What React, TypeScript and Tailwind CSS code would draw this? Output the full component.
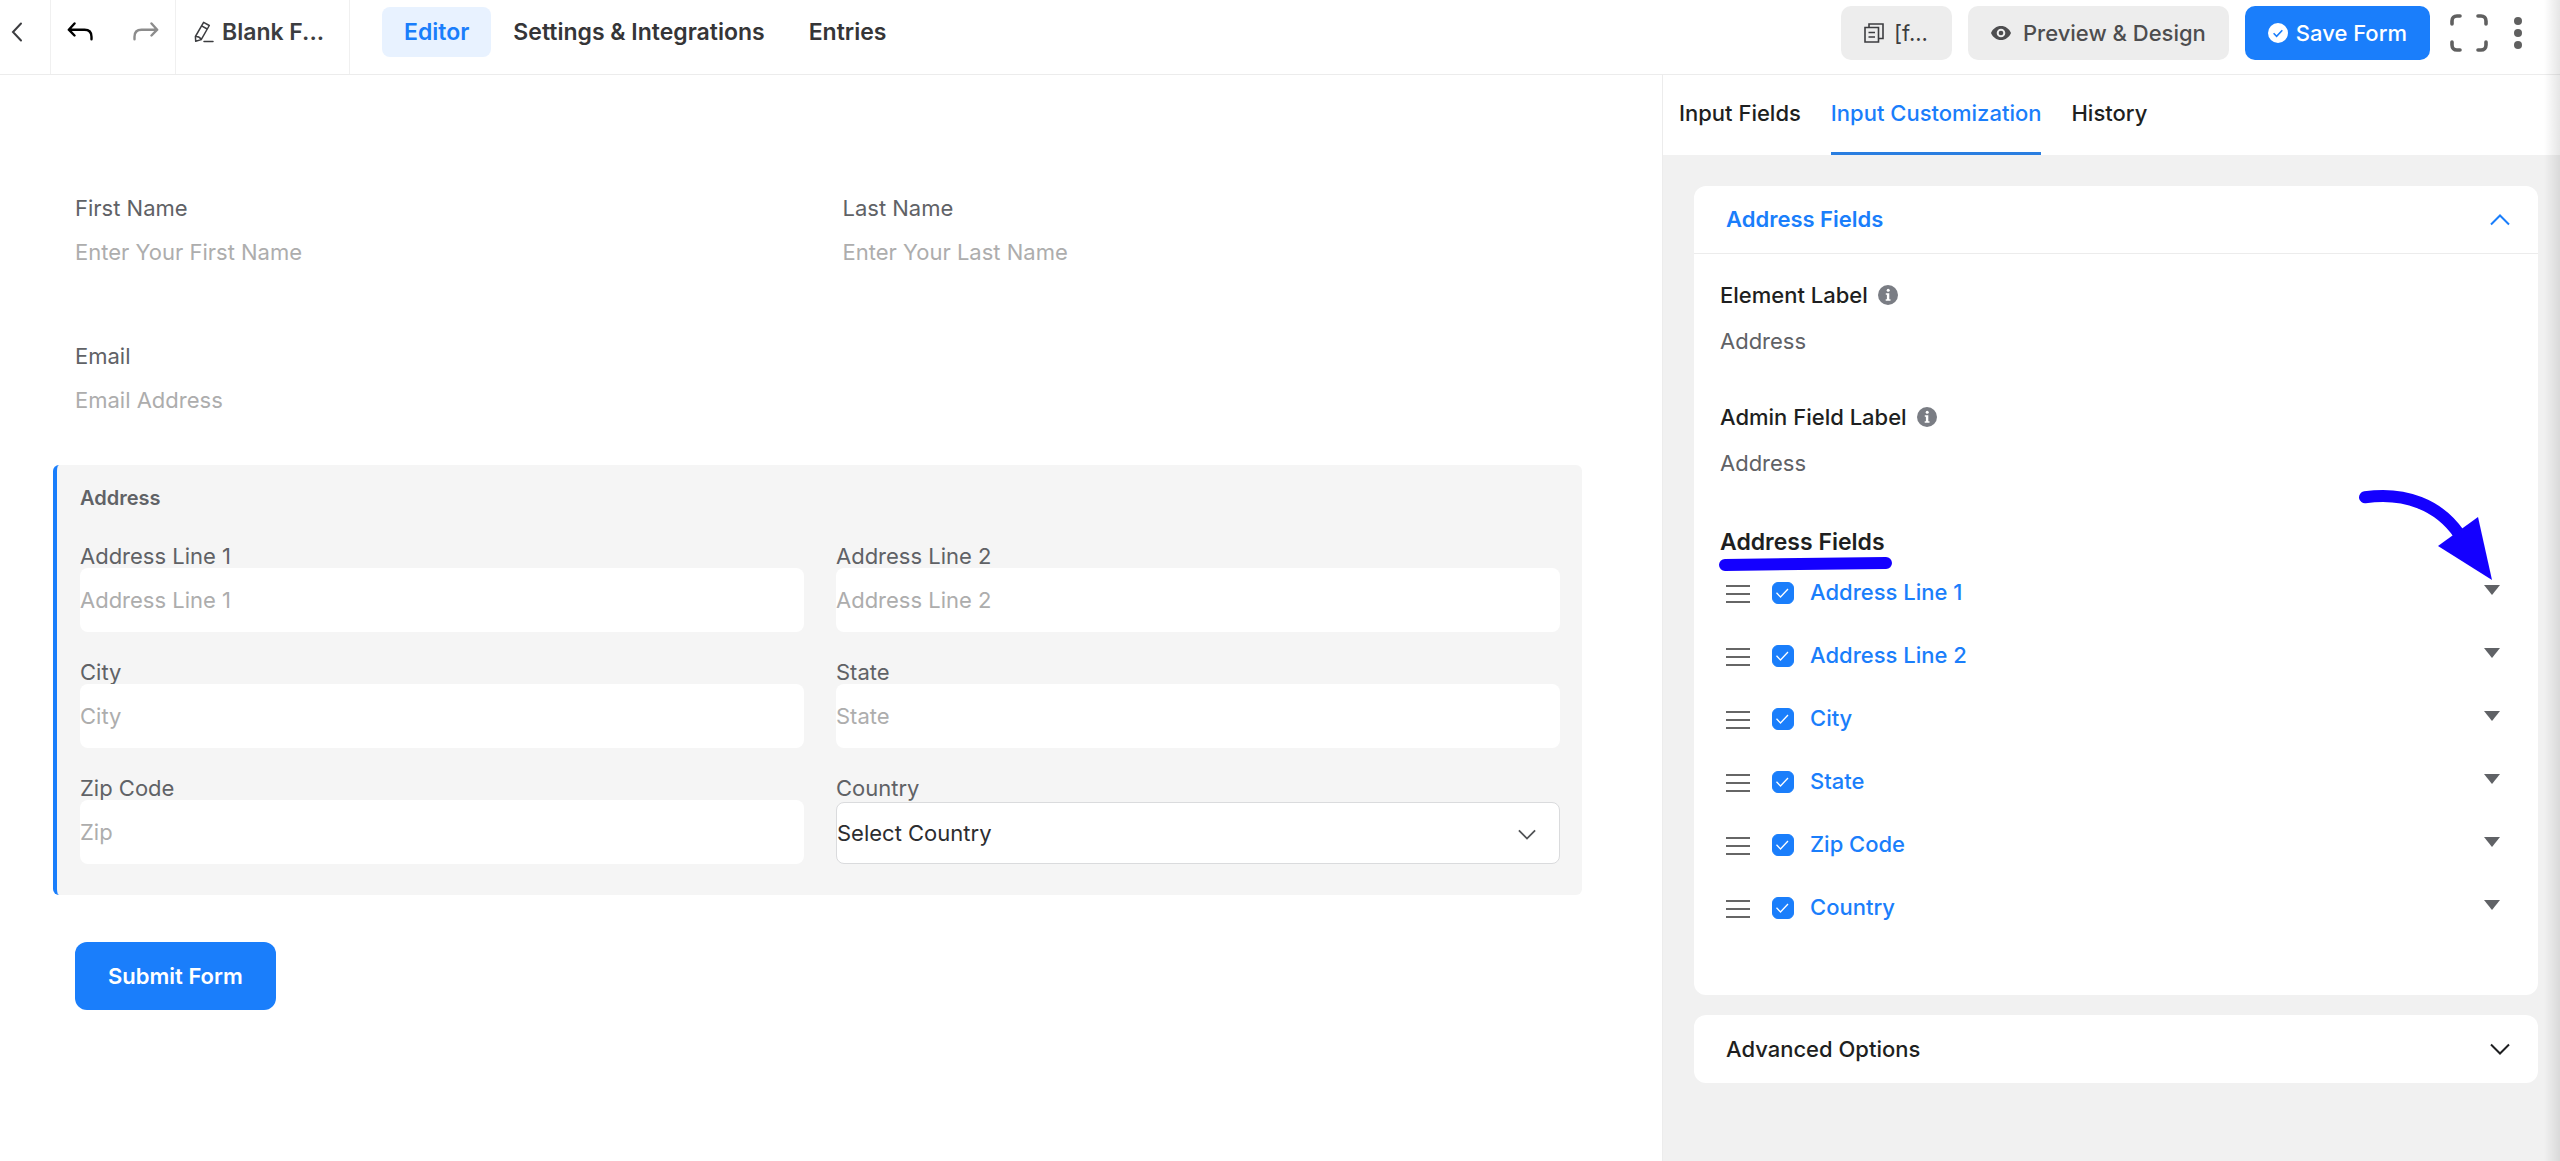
import React, { useState } from "react";
import clsx from "clsx";

type IconProps = { className?: string };

const BackIcon = ({ className }: IconProps) => (
  <svg viewBox="0 0 12 20" fill="none" className={className}>
    <path d="M10 1.500 2 10l8 8.500" stroke="currentColor" strokeWidth="2" strokeLinecap="round" />
  </svg>
);

const UndoIcon = ({ className }: IconProps) => (
  <svg viewBox="0 0 26 20" fill="none" className={className}>
    <path
      d="M7.500 1.500 1.800 7.700l5.700 5.800M2.200 7.700h15.300c4.600 0 7 2.500 7 7v2.600"
      stroke="currentColor"
      strokeWidth="2.400"
      strokeLinecap="round"
      strokeLinejoin="round"
    />
  </svg>
);

const PencilIcon = ({ className }: IconProps) => (
  <svg viewBox="0 0 20 22" fill="none" className={className}>
    <path
      d="M9.600 1.300 15.300 4.500 7.200 18.600 1.700 20.300 1.400 15.500ZM7.600 4.800l5.600 3.200M1.400 15.500c2.600-.4 4.800.8 5.800 3.100M10 20.600h9"
      stroke="currentColor"
      strokeWidth="1.500"
      strokeLinejoin="round"
      strokeLinecap="round"
    />
  </svg>
);

const CopyIcon = ({ className }: IconProps) => (
  <svg viewBox="0 0 20 20" fill="none" className={className}>
    <path
      d="M1 4.500h13.500V19H1ZM5 4.500V1h14v14.500h-4.500M4.500 9.500H11M4.500 14H11"
      stroke="currentColor"
      strokeWidth="1.600"
    />
  </svg>
);

const EyeIcon = ({ className }: IconProps) => (
  <svg viewBox="0 0 20 14" className={className}>
    <path
      fillRule="evenodd"
      d="M10 0C5.500 0 1.800 2.700 0 7c1.800 4.300 5.500 7 10 7s8.200-2.700 10-7C18.200 2.700 14.500 0 10 0Zm0 11.300a4.300 4.300 0 1 1 0-8.600 4.300 4.300 0 0 1 0 8.600Z"
      fill="currentColor"
    />
    <circle cx="10" cy="7" r="2.300" fill="currentColor" />
  </svg>
);

const CheckBadgeIcon = ({ className }: IconProps) => (
  <svg viewBox="0 0 20 20" fill="none" className={className}>
    <circle cx="10" cy="10" r="10" fill="#fff" />
    <path d="m5.600 10.300 3 3 5.700-6" stroke="#1a7efb" strokeWidth="1.600" />
  </svg>
);

const FullscreenIcon = ({ className }: IconProps) => (
  <svg viewBox="0 0 38 38" fill="none" className={className}>
    <path
      d="M2 10V7c0-3 2-5 5-5h3M28 2h3c3 0 5 2 5 5v3M36 28v3c0 3-2 5-5 5h-3M10 36H7c-3 0-5-2-5-5v-3"
      stroke="currentColor"
      strokeWidth="3.600"
      strokeLinecap="round"
    />
  </svg>
);

const DotsIcon = ({ className }: IconProps) => (
  <svg viewBox="0 0 8 32" className={className}>
    <circle cx="4" cy="4" r="4" fill="currentColor" />
    <circle cx="4" cy="16" r="4" fill="currentColor" />
    <circle cx="4" cy="28" r="4" fill="currentColor" />
  </svg>
);

const ChevronIcon = ({ className }: IconProps) => (
  <svg viewBox="0 0 20 12" fill="none" className={className}>
    <path d="m1 1.500 9 9 9-9" stroke="currentColor" strokeWidth="2" />
  </svg>
);

const InfoIcon = ({ className }: IconProps) => (
  <svg viewBox="0 0 20 20" className={className}>
    <circle cx="10" cy="10" r="10" fill="#7a7d84" />
    <circle cx="10.200" cy="5.300" r="1.500" fill="#fff" />
    <path d="M7.800 8.300h3.500v6h1.200v1.400H7.700v-1.400h1.200V9.700H7.800Z" fill="#fff" />
  </svg>
);

const DragIcon = ({ className }: IconProps) => (
  <svg viewBox="0 0 24 24" className={className}>
    <path d="M0 5h24M0 13h24M0 21h24" stroke="#666" strokeWidth="2" />
  </svg>
);

const CaretIcon = ({ className }: IconProps) => (
  <svg viewBox="0 0 18 18" className={className}>
    <path d="M1 1h16L9 11Z" fill="#606266" />
  </svg>
);

const navItems = ["Editor", "Settings & Integrations", "Entries"];
const tabs = ["Input Fields", "Input Customization", "History"];
const addressFields = ["Address Line 1", "Address Line 2", "City", "State", "Zip Code", "Country"];

const addressInputs = [
  { id: "address-1", label: "Address Line 1", placeholder: "Address Line 1" },
  { id: "address-2", label: "Address Line 2", placeholder: "Address Line 2" },
  { id: "city", label: "City", placeholder: "City" },
  { id: "state", label: "State", placeholder: "State" },
  { id: "zip", label: "Zip Code", placeholder: "Zip" },
];

function Header() {
  return (
    <header className="flex h-[75px] border-b border-[#ececec] text-[#3c3d40]">
      <button aria-label="Back" className="flex w-[51px] items-center border-r border-[#f0f0f0] pb-2.5 pl-[11px]">
        <BackIcon className="h-5 w-3" />
      </button>
      <div className="flex w-[125px] items-center justify-between border-r border-[#f0f0f0] pr-4 pb-2.5 pl-4">
        <button aria-label="Undo" className="text-black">
          <UndoIcon className="h-5 w-[26px]" />
        </button>
        <button aria-label="Redo" className="text-[#8c8c8c]">
          <UndoIcon className="h-5 w-[26px] -scale-x-100" />
        </button>
      </div>
      <button className="flex w-[174px] items-center gap-2 border-r border-[#f0f0f0] pb-2.5 pl-[18px] text-[23px] font-semibold">
        <PencilIcon className="h-[22px] w-5" />
        Blank F...
      </button>

      <nav className="flex items-center pb-2.5 pl-8 text-[23px] font-semibold">
        {navItems.map((item, i) => (
          <a
            key={item}
            href="#"
            className={clsx(
              "flex h-[50px] items-center rounded-lg px-[22px]",
              i === 0 ? "bg-[#e8f2ff] text-[#1a7efb]" : "text-[#353537]"
            )}
          >
            {item}
          </a>
        ))}
      </nav>

      <div className="ml-auto flex items-center gap-4 pr-[38px] pb-2 font-medium">
        <button className="flex h-[54px] w-[111px] items-center gap-2.5 rounded-[10px] bg-[#ededed] pl-[23px] font-normal">
          <CopyIcon className="size-5" />
          [f...
        </button>
        <button className="flex h-[54px] items-center gap-3 rounded-[10px] bg-[#ededed] px-[23px] text-[#4d4d4f]">
          <EyeIcon className="h-3.5 w-5" />
          Preview &amp; Design
        </button>
        <button className="flex h-[54px] items-center gap-2 rounded-[10px] bg-[#1a7efb] px-[23px] text-white">
          <CheckBadgeIcon className="size-5" />
          Save Form
        </button>
        <button aria-label="Fullscreen" className="ml-1 text-[#606060]">
          <FullscreenIcon className="size-[38px]" />
        </button>
        <button aria-label="More" className="ml-2.5 text-[#606060]">
          <DotsIcon className="h-8 w-2" />
        </button>
      </div>
    </header>
  );
}

type FieldProps = { id: string; label: string; placeholder: string };

function Field({ id, label, placeholder }: FieldProps) {
  return (
    <div className="flex flex-col">
      <label htmlFor={id} className="leading-6">
        {label}
      </label>
      <input
        id={id}
        type="text"
        placeholder={placeholder}
        className="h-16 w-full rounded-lg bg-white placeholder:text-[#adadad] focus:outline-none"
      />
    </div>
  );
}

function FormPreview() {
  return (
    <main className="min-w-0 flex-1 pt-[121px] pr-20 pl-[53px] text-[#606266]">
      <div className="grid grid-cols-2 gap-x-7 gap-y-[60px] pl-[22px]">
        <Field id="first-name" label="First Name" placeholder="Enter Your First Name" />
        <Field id="last-name" label="Last Name" placeholder="Enter Your Last Name" />
        <Field id="email" label="Email" placeholder="Email Address" />
      </div>

      <section className="mt-[33px] rounded-md border-l-4 border-[#1a7efb] bg-[#f5f5f5] pt-[21px] pr-[22px] pb-[31px] pl-[23px]">
        <h2 className="text-xl leading-6 font-semibold">Address</h2>
        <div className="mt-[34px] grid grid-cols-2 gap-x-8 gap-y-7">
          {addressInputs.map((field) => (
            <Field key={field.id} {...field} />
          ))}
          <div className="flex flex-col justify-between">
            <label htmlFor="country" className="leading-6">
              Country
            </label>
            <div className="relative">
              <select
                id="country"
                className="h-[62px] w-full appearance-none rounded-lg border border-[#dadbdd] bg-white text-[#2c2d30]"
              >
                <option>Select Country</option>
              </select>
              <ChevronIcon className="pointer-events-none absolute top-[27px] right-6 h-[11px] w-[18px] text-[#505255]" />
            </div>
          </div>
        </div>
      </section>

      <button className="mt-[47px] ml-[22px] h-[68px] rounded-xl bg-[#1a7efb] px-[33px] font-semibold text-white">
        Submit Form
      </button>
    </main>
  );
}

function SettingField({ id, label }: { id: string; label: string }) {
  const [value, setValue] = useState("Address");

  return (
    <div>
      <div className="flex h-6 items-center gap-2.5 font-medium">
        <label htmlFor={id}>{label}</label>
        <InfoIcon className="size-5" />
      </div>
      <input
        id={id}
        type="text"
        value={value}
        onChange={(e) => setValue(e.target.value)}
        className="h-[68px] w-full text-[#606266] focus:outline-none"
      />
    </div>
  );
}

function AddressFieldRow({ name }: { name: string }) {
  return (
    <li className="flex h-[63px] items-center pr-[11px] pl-1.5">
      <DragIcon className="mr-[22px] size-6" />
      <label className="flex items-center gap-4 font-medium text-[#1a7efb]">
        <span className="grid">
          <input
            type="checkbox"
            defaultChecked
            className="peer col-start-1 row-start-1 size-[22px] appearance-none rounded-md border border-[#1a7efb] checked:bg-[#1a7efb]"
          />
          <svg
            viewBox="0 0 22 22"
            fill="none"
            className="pointer-events-none invisible col-start-1 row-start-1 size-[22px] peer-checked:visible"
          >
            <path d="m4.500 10.800 4 4.200 7.500-8" stroke="#fff" strokeWidth="1.300" />
          </svg>
        </span>
        {name}
      </label>
      <button aria-label={`Toggle ${name}`} className="ml-auto">
        <CaretIcon className="size-[18px]" />
      </button>
    </li>
  );
}

function Sidebar() {
  return (
    <aside className="flex w-[898px] shrink-0 flex-col border-l border-[#ececec] bg-[#f1f1f1] text-[#1e1f21]">
      <div className="flex h-20 gap-[30px] bg-white pl-4 font-medium">
        {tabs.map((tab) => (
          <button
            key={tab}
            className={clsx(
              "border-b-[3px]",
              tab === "Input Customization" ? "border-[#2a7ee0] text-[#1a7efb]" : "border-transparent"
            )}
          >
            {tab}
          </button>
        ))}
      </div>

      <div className="flex flex-col gap-5 pt-[31px] pr-[22px] pl-[31px]">
        <section className="rounded-xl bg-white">
          <button className="flex h-[68px] w-full items-center justify-between border-b border-[#ececec] pr-7 pl-8 font-semibold text-[#1a7efb]">
            Address Fields
            <ChevronIcon className="h-3 w-5 rotate-180" />
          </button>
          <div className="flex flex-col gap-[30px] px-[26px] pt-[29px] pb-14">
            <SettingField id="element-label" label="Element Label" />
            <SettingField id="admin-label" label="Admin Field Label" />
            <div className="relative">
              <h3 className="mt-[3px] text-[23px] leading-6 font-semibold">Address Fields</h3>
              <svg viewBox="0 0 176 16" fill="none" className="absolute top-[29px] -left-0.5 h-4 w-44">
                <path d="M7 9 168 7" stroke="#1400ff" strokeWidth="12" strokeLinecap="round" />
              </svg>
              <ul className="mt-[7px]">
                {addressFields.map((name) => (
                  <AddressFieldRow key={name} name={name} />
                ))}
              </ul>
              <svg
                viewBox="0 0 140 96"
                fill="none"
                className="pointer-events-none absolute -top-10 right-[17px] h-24 w-[140px]"
              >
                <path
                  d="M10 10.300C50 4.500 84 18 104 47"
                  stroke="#1400ff"
                  strokeWidth="12"
                  strokeLinecap="round"
                />
                <path d="M123 30 83 59l54 34Z" fill="#1400ff" />
              </svg>
            </div>
          </div>
        </section>

        <section className="rounded-xl bg-white">
          <button className="flex h-[68px] w-full items-center justify-between pr-7 pl-8 font-medium">
            Advanced Options
            <ChevronIcon className="h-3 w-5" />
          </button>
        </section>
      </div>
    </aside>
  );
}

export default function App() {
  return (
    <div className="relative flex min-h-screen flex-col bg-white font-['Inter',sans-serif] text-[22px]">
      <Header />
      <div className="flex flex-1">
        <FormPreview />
        <Sidebar />
      </div>
      {/* shadow along the window edge */}
      <div className="pointer-events-none absolute inset-y-0 right-0 w-4 bg-linear-to-r from-transparent to-black/10" />
    </div>
  );
}
